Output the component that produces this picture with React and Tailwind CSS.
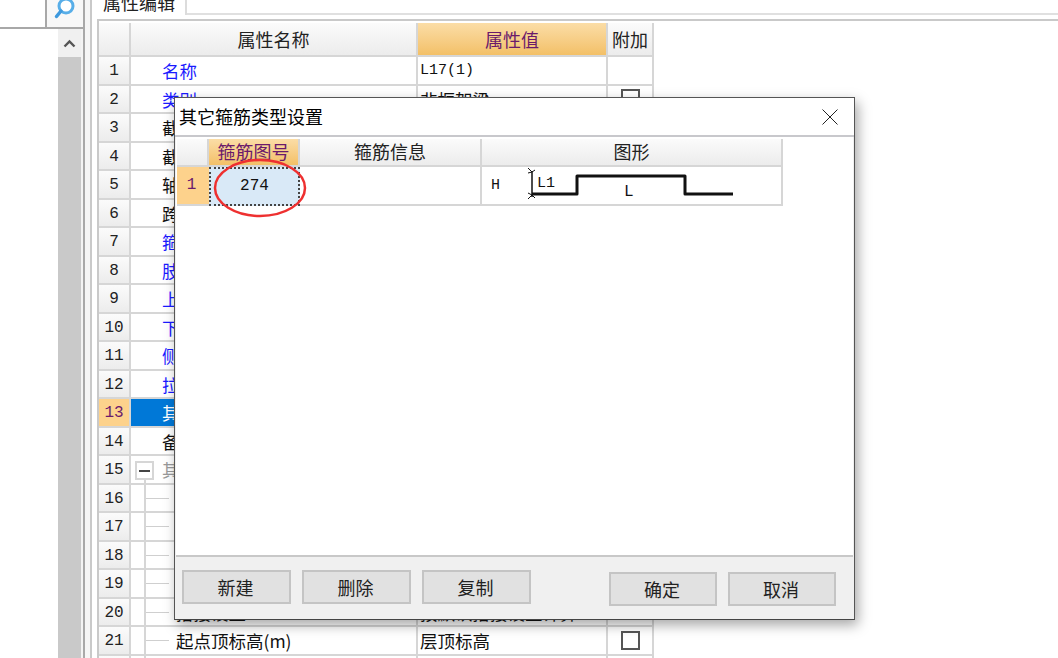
const CJK = { fontFamily: '"Noto Sans CJK SC", sans-serif' };
const MONO = { fontFamily: '"Liberation Mono", "Noto Sans CJK SC", monospace' };

const rows = [
  { n: 1, name: '名称', c: 'blue', v: 'L17(1)' },
  { n: 2, name: '类别', c: 'blue', v: '非框架梁', box: true },
  { n: 3, name: '截面宽度', c: 'black' },
  { n: 4, name: '截面高度', c: 'black' },
  { n: 5, name: '轴线距梁左边线', c: 'black' },
  { n: 6, name: '跨数量', c: 'black' },
  { n: 7, name: '箍筋', c: 'blue' },
  { n: 8, name: '肢数', c: 'blue' },
  { n: 9, name: '上部通长筋', c: 'blue' },
  { n: 10, name: '下部通长筋', c: 'blue' },
  { n: 11, name: '侧面构造筋', c: 'blue' },
  { n: 12, name: '拉筋', c: 'blue' },
  { n: 13, name: '其它箍筋', c: 'sel' },
  { n: 14, name: '备注', c: 'black' },
  { n: 15, name: '其它属性', c: 'group' },
  { n: 16, tree: true },
  { n: 17, tree: true },
  { n: 18, tree: true },
  { n: 19, tree: true },
  { n: 20, tree: true, name: '搭接设置', v: '按默认搭接设置计算' },
  { n: 21, tree: true, name: '起点顶标高(m)', v: '层顶标高', box: true },
  { n: 22, tree: true },
];

function Row({ r }) {
  const sel = r.c === 'sel';
  const color = r.c === 'blue' ? 'text-[#1a1aff]' : r.c === 'group' ? 'text-[#9a9a9a]' : sel ? 'text-white' : 'text-[#111]';
  return (
    <>
      <div
        className={`h-[28.5px] pt-[2px] flex items-center justify-center border-r-2 border-b-2 border-[#d6d6d6] text-[16px] ${sel ? 'bg-[#fdd28c] text-[#6b1a6b]' : 'bg-gradient-to-b from-[#fbfbfb] to-[#ececec] text-[#222]'}`}
        style={MONO}
      >
        {r.n}
      </div>
      <div className={`relative h-[28.5px] pt-[2px] flex items-center border-r-2 border-b-2 border-[#d6d6d6] text-[17.5px] ${sel ? 'bg-[#0078d7]' : 'bg-white'} ${color} ${r.tree ? 'pl-[45px]' : 'pl-[31px]'}`}>
        {r.tree && (
          <>
            <span className="absolute left-[13px] top-0 bottom-0 w-[2px] bg-[#d6d6d6]" />
            <span className="absolute left-[15px] top-[13px] w-[23px] h-[1px] bg-[#cfcfcf]" />
          </>
        )}
        {r.c === 'group' && (
          <>
            <span className="absolute left-[4px] top-[5px] w-[19px] h-[19px] border-2 border-[#d6d6d6] bg-white flex items-center justify-center">
              <span className="w-[11px] h-[2px] bg-[#444]" />
            </span>
            <span className="absolute left-[13px] top-[24px] bottom-0 w-[2px] bg-[#d6d6d6]" />
          </>
        )}
        <span className="whitespace-nowrap">{r.name}</span>
      </div>
      <div className="h-[28.5px] pt-[2px] flex items-center pl-[2px] border-r-2 border-b-2 border-[#d6d6d6] bg-white text-[#111] text-[17.5px] whitespace-nowrap overflow-hidden">
        {r.v === 'L17(1)' ? <span className="text-[15px]" style={MONO}>{r.v}</span> : r.v}
      </div>
      <div className="h-[28.5px] flex items-center justify-center border-r-2 border-b-2 border-[#d6d6d6] bg-white">
        {r.box && <span className="w-[19px] h-[19px] border-2 border-[#555] bg-white" />}
      </div>
    </>
  );
}

function Btn({ children, w = 'w-[109px]' }) {
  return (
    <div className={`${w} h-[34px] flex items-center justify-center pr-[2px] bg-[#e1e1e1] border-2 border-[#c4c4c4] text-[18px] text-[#222]`}>
      {children}
    </div>
  );
}

function Shape() {
  return (
    <svg width="220" height="36" viewBox="0 0 220 36" className="absolute left-[40px] top-0">
      <path d="M10 27 H55 V9 H163 V27 H211" fill="none" stroke="#111" strokeWidth="3" strokeLinejoin="round" />
      <path d="M10 4 V30" stroke="#111" strokeWidth="1.5" />
      <path d="M6 1 L10 5 L13 3 M6 6 L10 5 M6 32 L10 28 L13 31 M6 26 L10 28" stroke="#111" strokeWidth="1" fill="none" />
    </svg>
  );
}

export default function App() {
  return (
    <div className="relative w-[1058px] h-[658px] overflow-hidden bg-white flex" style={CJK}>
      {/* left panel */}
      <div className="w-[83px] shrink-0 flex flex-col">
        <div className="h-[29px] flex border-b-2 border-[#a8a8a8]">
          <div className="w-[47px] border-r-2 border-[#a8a8a8] bg-white" />
          <div className="flex-1 bg-[#f8f8f8] flex justify-center">
            <svg width="22" height="20" viewBox="0 0 22 20" className="-mt-[1px]">
              <circle cx="12" cy="7" r="7" fill="#fff" stroke="#58aee8" strokeWidth="3" />
              <path d="M7 12 L2.5 17.5" stroke="#3f9ade" strokeWidth="3.5" strokeLinecap="round" />
            </svg>
          </div>
        </div>
        <div className="flex-1 flex">
          <div className="w-[58px] bg-white" />
          <div className="w-[23px] flex flex-col bg-[#f0f0f0]">
            <div className="h-[28px] flex items-center justify-center">
              <svg width="13" height="9" viewBox="0 0 13 9"><path d="M1.5 7.5 L6.5 2.5 L11.5 7.5" fill="none" stroke="#555" strokeWidth="2.4" /></svg>
            </div>
            <div className="flex-1 bg-[#c9c9c9]" />
          </div>
          <div className="w-[2px] bg-[#f4f4f4]" />
        </div>
      </div>

      {/* splitter */}
      <div className="w-[2px] shrink-0 bg-[#a9a9a9]" />
      <div className="w-[5px] shrink-0 bg-[#f6f6f6]" />
      <div className="w-[2px] shrink-0 bg-[#c9c9c9]" />

      {/* property panel */}
      <div className="flex-1 min-w-0 flex flex-col">
        <div className="h-[15px] shrink-0 flex">
          <div className="w-[95px] pl-[11px] h-[15px] overflow-hidden border-r-2 border-[#dcdcdc] bg-white">
            <div className="-mt-[11px] text-[18px] leading-[26px] text-[#222] whitespace-nowrap">属性编辑</div>
          </div>
          <div className="flex-1 border-b-2 border-[#e0e0e0]" />
        </div>
        <div className="shrink-0 ml-[5px] mt-[4px] h-[2px] bg-[#c9c9c9]" />
        <div className="flex-1 ml-[5px] border-l-2 border-[#c9c9c9] pt-[2px]">
          <div className="w-[555px] grid grid-cols-[32px_287px_190px_46px]">
            <div className="h-[34px] border-r-2 border-b-2 border-[#d6d6d6] bg-gradient-to-b from-[#fbfbfb] to-[#ececec]" />
            <div className="h-[34px] flex items-center justify-center border-r-2 border-b-2 border-[#d6d6d6] bg-gradient-to-b from-[#fbfbfb] to-[#ececec] text-[18px] text-[#222]">属性名称</div>
            <div className="h-[34px] flex items-center justify-center border-r-2 border-b-2 border-[#d6d6d6] bg-gradient-to-b from-[#fbdda6] to-[#f3c067] text-[18px] text-[#6b1a6b]">属性值</div>
            <div className="h-[34px] flex items-center justify-center border-r-2 border-b-2 border-[#d6d6d6] bg-gradient-to-b from-[#fbfbfb] to-[#ececec] text-[18px] text-[#222]">附加</div>
            {rows.map((r) => <Row key={r.n} r={r} />)}
          </div>
        </div>
      </div>

      {/* dialog window */}
      <div className="absolute left-[174px] top-[97px] w-[681px] h-[523px] flex flex-col bg-[#f0f0f0] border border-[#555] border-b-[#444] shadow-[3px_5px_12px_rgba(0,0,0,0.35)]">
        <div className="h-[39px] shrink-0 flex items-center justify-between bg-white pl-[4px] pr-[16px] border-b-2 border-[#c8c8cc]">
          <span className="text-[18px] text-black">其它箍筋类型设置</span>
          <svg width="16" height="16" viewBox="0 0 16 16"><path d="M0.5 0.5 L15.5 15.5 M15.5 0.5 L0.5 15.5" stroke="#222" strokeWidth="1" /></svg>
        </div>
        <div className="flex-1 mx-[1px] bg-white border-b-2 border-[#c8c8c8] pt-[2px] pl-[1px]">
          <div className="w-[606px] grid grid-cols-[32px_91px_182px_301px]">
            <div className="h-[28px] border-r-2 border-b-2 border-[#d6d6d6] bg-gradient-to-b from-[#fbfbfb] to-[#ececec]" />
            <div className="h-[28px] pb-[2px] flex items-center justify-center border-r-2 border-b-2 border-[#d6d6d6] bg-gradient-to-b from-[#fbdda6] to-[#f3c067] text-[18px] text-[#6b1a6b] whitespace-nowrap">箍筋图号</div>
            <div className="h-[28px] pb-[2px] flex items-center justify-center border-r-2 border-b-2 border-[#d6d6d6] bg-gradient-to-b from-[#fbfbfb] to-[#ececec] text-[18px] text-[#222]">箍筋信息</div>
            <div className="h-[28px] pb-[2px] flex items-center justify-center border-r-2 border-b-2 border-[#d6d6d6] bg-gradient-to-b from-[#fbfbfb] to-[#ececec] text-[18px] text-[#222]">图形</div>
            <div className="h-[39px] pb-[2px] flex items-center justify-center pr-[3px] bg-[#fdd28c] border-b-2 border-[#d6d6d6] text-[#6b1a6b] text-[16px]" style={MONO}>1</div>
            <div className="h-[39px] pb-[2px] flex items-center justify-center bg-[#d9e9f7] border-2 border-dotted border-[#444] text-[#111] text-[16px]" style={MONO}>274</div>
            <div className="h-[39px] bg-white border-r-2 border-b-2 border-[#d6d6d6]" />
            <div className="relative h-[39px] bg-white border-r-2 border-b-2 border-[#d6d6d6] text-[#111] text-[15px]" style={MONO}>
              <span className="absolute left-[9px] top-[8px]">H</span>
              <span className="absolute left-[55px] top-[6px]">L1</span>
              <span className="absolute left-[142px] top-[13px] text-[16px]">L</span>
              <Shape />
            </div>
          </div>
        </div>
        <div className="h-[62px] shrink-0 flex pl-[7px] pr-[18px]">
          <div className="flex gap-[11px] pt-[13px]">
            <Btn>新建</Btn>
            <Btn>删除</Btn>
            <Btn>复制</Btn>
          </div>
          <div className="ml-auto flex gap-[11px] pt-[15px]">
            <Btn w="w-[108px]">确定</Btn>
            <Btn w="w-[108px]">取消</Btn>
          </div>
        </div>
      </div>

      {/* hand-drawn annotation */}
      <svg width="100" height="64" viewBox="0 0 100 64" className="absolute left-[210px] top-[157px]">
        <ellipse cx="50" cy="31" rx="45" ry="28" fill="none" stroke="#ee3030" strokeWidth="2.5" />
      </svg>
    </div>
  );
}
